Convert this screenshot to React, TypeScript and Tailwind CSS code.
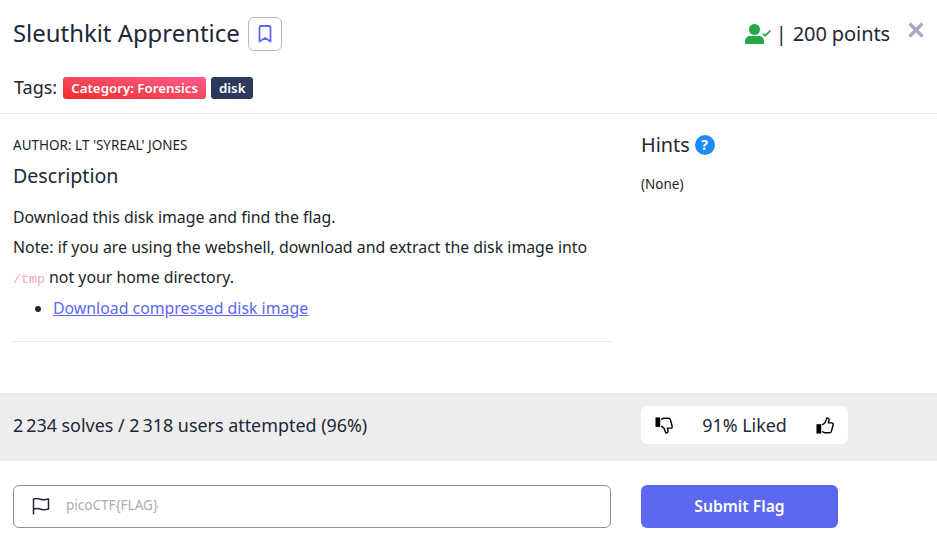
function UserCheck() {
  return (
    <svg width="26" height="20" viewBox="0 0 26 20" fill="#28a745">
      <circle cx="9.500" cy="5.500" r="5.500" />
      <path d="M0 20v-2.500C0 14 2.500 12 5.500 12h8c3 0 5.500 2 5.500 5.500V20z" />
      <path d="M18 9.500l2.200 2.200L25.500 6.500" fill="none" stroke="#28a745" strokeWidth="1.700" />
    </svg>
  );
}

function BookmarkIcon() {
  return (
    <svg width="14" height="18" viewBox="0 0 14 18" fill="none" stroke="#5c67f2" strokeWidth="1.800" strokeLinejoin="round">
      <path d="M1.500 2.500C1.500 1.500 2 1 3 1h8c1 0 1.500.5 1.500 1.500V16.500L7 13l-5.500 3.500z" />
    </svg>
  );
}

function CloseIcon() {
  return (
    <svg width="16" height="16" viewBox="0 0 16 16" fill="none" stroke="#a5abc3" strokeWidth="3.400">
      <path d="M1.500 1.500l13 13M14.500 1.500l-13 13" />
    </svg>
  );
}

function FlagIcon() {
  return (
    <svg width="18" height="18" viewBox="0 0 18 18" fill="none" stroke="#212738" strokeWidth="1.500" strokeLinejoin="round" className="-translate-y-px">
      <path d="M1.500 17.500V2c3-1.200 4.500-.6 7 .3 2.500.8 4.500.8 8-.3v10c-3 1.100-5 1-7.500.2-2.500-.8-4.500-1-7.500-.2" />
    </svg>
  );
}

function ThumbUp({ flip }: { flip?: boolean }) {
  return (
    <svg width="18" height="17" viewBox="0 0 19 19" preserveAspectRatio="none" className={flip ? "-scale-y-100" : ""}>
      <rect x="0.500" y="8" width="5" height="10.500" fill="#000" />
      <path
        d="M6.500 9l3-2.500L11.500 1c1.800 0 2.600 1.200 2.200 2.800L13 6.500h3.500c1.300 0 2 1 1.600 2.200l-1.800 7c-.3 1.200-1.200 1.900-2.300 1.900H9.500c-1.200 0-2-.5-3-1.300"
        fill="none"
        stroke="#000"
        strokeWidth="1.500"
        strokeLinejoin="round"
      />
    </svg>
  );
}

export default function App() {
  return (
    <div className="w-[937px] h-[545px] overflow-hidden bg-white text-[#212529] font-['Noto_Sans',sans-serif]">
      <header className="h-[114px] border-b border-[#e9ecef] px-[13px]">
        <div className="flex items-start justify-between pt-[17px]">
          <div className="flex items-center gap-2">
            <h1 className="-translate-y-px text-[23.900px] leading-[34px] text-[#212738]">Sleuthkit Apprentice</h1>
            <button className="flex h-[34px] w-[34px] items-center justify-center rounded-md border border-[#b4b9cc]">
              <BookmarkIcon />
            </button>
          </div>
          <div className="flex items-start">
            <div className="flex items-center pr-[18px] text-[20px] leading-[34px] text-[#212738]">
              <UserCheck />
              <span className="ml-[5px] mr-[6px]">|</span>
              <span className="tracking-[-0.100px]">200 points</span>
            </div>
            <div className="mt-[-12px] h-4 w-4 translate-y-[17px]">
              <CloseIcon />
            </div>
          </div>
        </div>
        <div className="mt-[25px] flex items-center">
          <span className="ml-px -translate-y-px text-[18px] leading-[24px]">Tags:</span>
          <span className="ml-[6px] rounded-[3px] bg-gradient-to-tr from-[#f5291f] to-[#fd5a8a] px-2 text-[13.300px] font-semibold leading-[22px] text-white">
            Category: Forensics
          </span>
          <span className="ml-[5px] rounded-[3px] bg-gradient-to-tr from-[#2b3659] to-[#2f3a60] px-2 text-[13.300px] font-semibold leading-[22px] text-white">
            disk
          </span>
        </div>
      </header>

      <main className="flex h-[279px] px-[13px]">
        <section className="w-[598px]">
          <p className="mt-[21px] text-[13.500px] leading-[20px]">AUTHOR: LT 'SYREAL' JONES</p>
          <h2 className="mt-[8px] text-[19.600px] leading-[26px] text-[#212738]">Description</h2>
          <div className="mt-[13px] text-[15.860px] leading-[30.200px]">
            <p>Download this disk image and find the flag.</p>
            <p>Note: if you are using the webshell, download and extract the disk image into</p>
            <p>
              <code className="font-['Liberation_Mono',monospace] text-[13.300px] leading-none text-[#f8a5c2]">/tmp</code> not your home directory.
            </p>
            <ul className="list-disc pl-10">
              <li>
                <a className="text-[#5c67f2] underline" href="#">Download compressed disk image</a>
              </li>
            </ul>
          </div>
          <hr className="mt-[18px] border-[#e5e7eb]" />
        </section>
        <aside className="ml-[30px]">
          <div className="mt-[18px] flex items-center gap-[5px]">
            <h2 className="text-[19.800px] leading-[26px] text-[#212738]">Hints</h2>
            <span className="flex h-5 w-5 items-center justify-center rounded-full bg-[#1e8cf5] text-[14px] font-bold leading-none text-white">?</span>
          </div>
          <p className="mt-[16px] text-[13.500px] leading-[20px]">(None)</p>
        </aside>
      </main>

      <section className="flex h-[68px] items-center bg-[#ededed] px-[13px] pb-[4px]">
        <p className="w-[628px] text-[17.900px] text-[#212738]">2&#8201;234 solves / 2&#8201;318 users attempted (96%)</p>
        <div className="flex h-[38px] w-[207px] items-center justify-between rounded-md bg-white px-[14px]">
          <ThumbUp flip />
          <span className="text-[17.900px] text-[#212738]">91% Liked</span>
          <ThumbUp />
        </div>
      </section>

      <section className="flex px-[13px] pt-[24px]">
        <div className="flex h-[43px] w-[598px] items-center rounded-md border border-[#8f8f9d] pl-[18px]">
          <FlagIcon />
          <span className="ml-[16px] -translate-y-[1px] text-[13.500px] text-[#a7adb8]">picoCTF{"{FLAG}"}</span>
        </div>
        <button className="ml-[30px] h-[43px] w-[197px] rounded-md bg-[#5c67f2] pt-px text-[15.700px] font-semibold text-white">Submit Flag</button>
      </section>
    </div>
  );
}
